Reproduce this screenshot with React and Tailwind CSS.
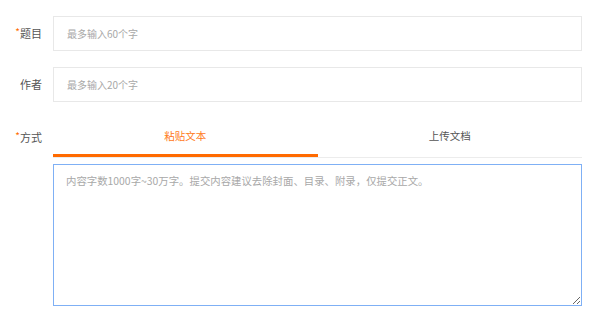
export default function App() {
  const font = { fontFamily: '"Noto Sans CJK SC", "Noto Sans", sans-serif' };

  return (
    <div className="w-[600px] h-[316px] bg-white pt-4 pr-[18px]" style={font}>
      {/* 题目 */}
      <div className="flex items-center">
        <label className="w-[53px] pr-[11px] text-right text-[11px] text-[#555]">
          <span className="text-[#ff6a00] text-[10px] relative -top-[2px]">*</span>题目
        </label>
        <input
          className="flex-1 h-[35px] border border-[#e8e8e8] px-[13px] text-[10px] text-[#333] placeholder:text-[#a8a8a8] outline-none"
          placeholder="最多输入60个字"
        />
      </div>

      {/* 作者 */}
      <div className="flex items-center mt-4">
        <label className="w-[53px] pr-[11px] text-right text-[11px] text-[#555]">作者</label>
        <input
          className="flex-1 h-[35px] border border-[#e8e8e8] px-[13px] text-[10px] text-[#333] placeholder:text-[#a8a8a8] outline-none"
          placeholder="最多输入20个字"
        />
      </div>

      {/* 方式 */}
      <div className="flex mt-4">
        <label className="w-[53px] h-[39px] flex items-center justify-end pr-[11px] text-[11px] text-[#555]">
          <span className="text-[#ff6a00] text-[10px] relative -top-[2px]">*</span>方式
        </label>
        <div className="flex-1">
          <div className="flex border-b border-[#ececec]">
            <button className="flex-1 h-[39px] flex items-center justify-center text-[10.5px] text-[#ff7a1a] border-b-[3px] border-[#ff6a00]">
              粘贴文本
            </button>
            <button className="flex-1 h-[39px] flex items-center justify-center text-[10.5px] text-[#555] border-b-[3px] border-transparent">
              上传文档
            </button>
          </div>
          <textarea
            className="block w-full h-[142px] mt-[6px] border border-[#7fb0f5] px-3 py-[9px] text-[10.4px] leading-[14px] text-[#333] placeholder:text-[#a8a8a8] outline-none"
            placeholder="内容字数1000字~30万字。提交内容建议去除封面、目录、附录，仅提交正文。"
          />
        </div>
      </div>
    </div>
  );
}
